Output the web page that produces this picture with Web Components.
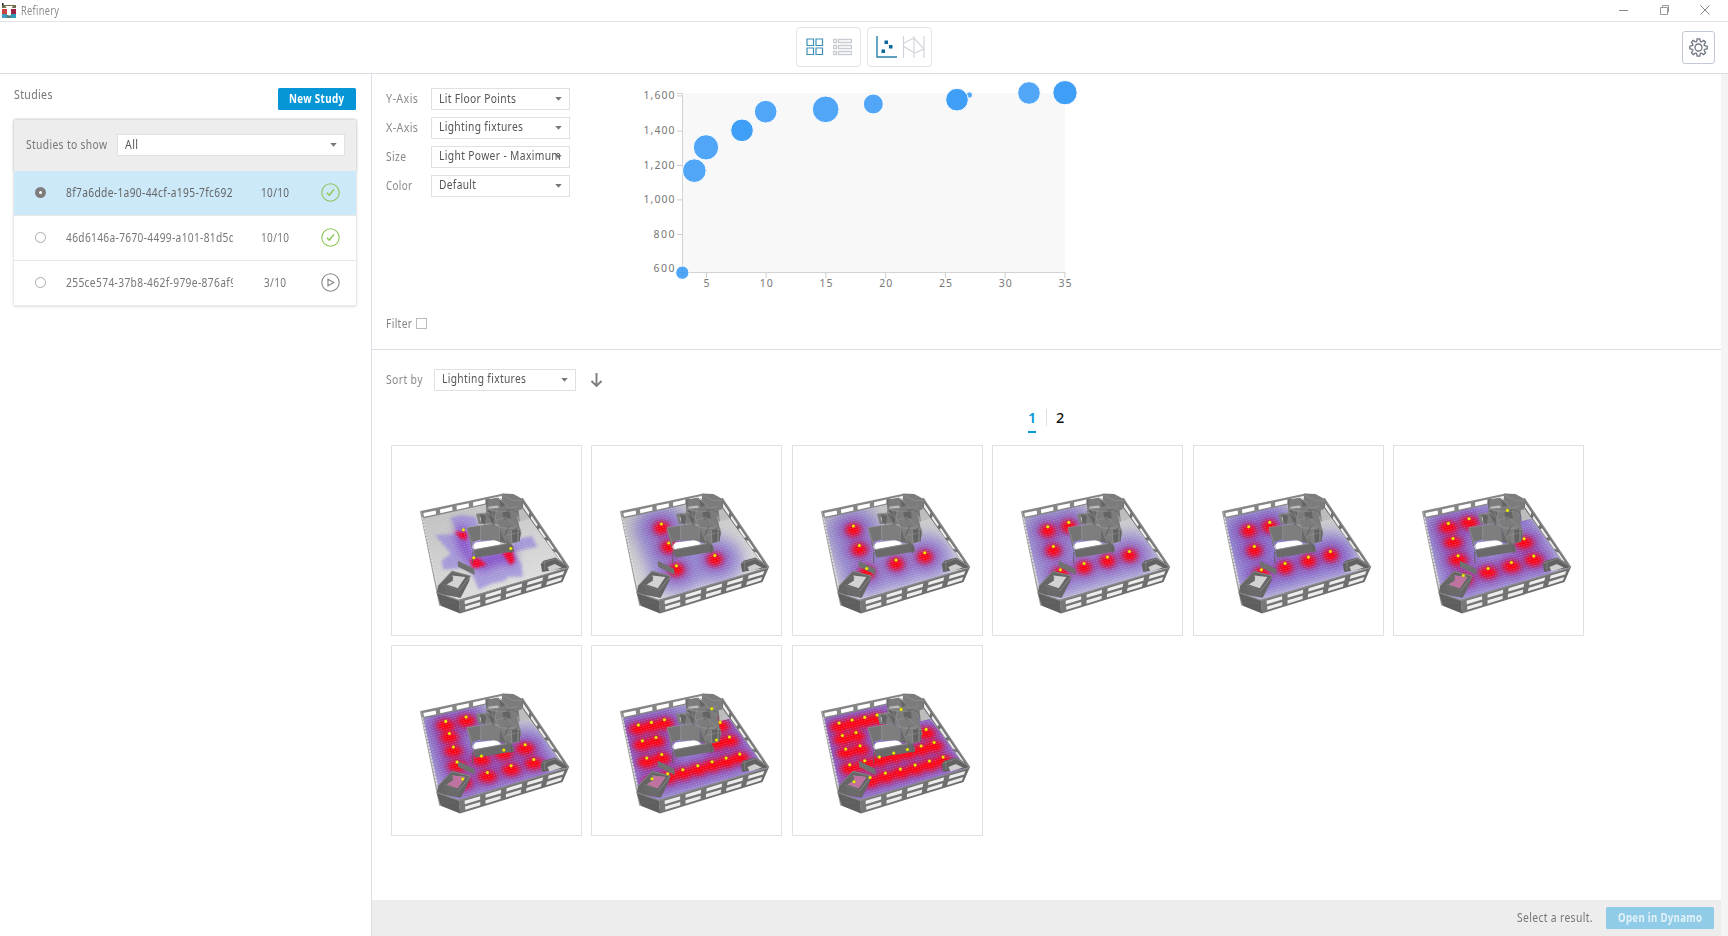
<!DOCTYPE html>
<html lang="en">
<head>
<meta charset="utf-8">
<title>Refinery</title>
<style>
html,body{margin:0;height:100%;overflow:hidden;background:#fff}
body{font:12px/16px "Noto Sans","Open Sans",sans-serif;color:#777}
</style>
</head>
<body>
<refinery-app></refinery-app>
<script>
const define = (name, css, html, setup) => customElements.define(name, class extends HTMLElement {
  connectedCallback() {
    if (this.shadowRoot) return;
    const root = this.attachShadow({mode: 'open'});
    root.innerHTML = `<style>*{box-sizing:border-box}${css}</style>${typeof html === 'function' ? html(this) : html}`;
    if (setup) setup(this, root);
  }
});

/* Single-line text condensed to a given width */
define('fit-text', `:host{display:inline-block;white-space:pre;flex:none}span{display:inline-block;letter-spacing:.4px;transform-origin:0 50%}`,
  `<span><slot></slot></span>`, (el, root) => {
    const s = root.querySelector('span'), w = +el.getAttribute('w');
    if (w) {
      const k = w / (s.getBoundingClientRect().width - .4);
      el.style.width = w + 'px';
      s.style.transform = `scaleX(${k})`;
    }
  });

define('title-bar', `:host{display:flex;height:22px;border-bottom:1px solid #e1e3e5;align-items:center;color:#8d8d8d;padding:0 0 0 2px}
  .logo{width:14px;height:16px;margin-right:5px}.win{margin-left:auto;display:flex;gap:27px;padding:0 16px 2px 0}`,
  `<svg class="logo" viewBox="0 0 14 16"><path d="M0 2h14v3H0z" fill="#6d6c4d"/><path d="M0 6h5v5H0z" fill="#c8423f"/><path d="M9 6h5v5H9z" fill="#9c2346"/><path d="M0 11h5v4H0z" fill="#4098ba"/><path d="M5 12h4v3H5z" fill="#4f7a78"/><path d="M9 11h5v4H9z" fill="#2d9bb5"/><path d="M3 3h8L8.500 7v5.500h-2V7z" fill="#fff"/><path d="M-2 -1h3.500v3.500h-3.500z" fill="#222"/></svg>
  <fit-text w="38">Refinery</fit-text>
  <div class="win"><svg width="14" height="12" viewBox="0 0 14 12"><path d="M3 6.500h9" stroke="#888"/></svg>
  <svg width="14" height="12" viewBox="0 0 14 12" fill="none" stroke="#999"><path d="M3.500 3.500h7v7h-7zM5.500 3V1.500h6v6.500H11"/></svg>
  <svg width="14" height="12" viewBox="0 0 14 12" fill="none" stroke="#888"><path d="M2.500 1.500l9 9M11.500 1.500l-9 9"/></svg></div>`);

define('tool-group', `:host{display:flex;width:65px;height:40px;border:1.500px solid #dfe3ea;border-radius:4px;align-items:center;justify-content:center;gap:9px;padding-left:1px}`, `<slot></slot>`);

define('tool-bar', `:host{display:flex;height:52px;border-bottom:1px solid #d9dce2;align-items:center;justify-content:center;gap:6px;padding-bottom:2px;position:relative}
  svg{display:block}.gear{position:absolute;right:13px;top:8.500px;width:33px;height:33px;border:1px solid #c3cad6;border-radius:3px;display:grid;place-items:center}`,
  `<tool-group><svg width="18" height="18" viewBox="0 0 18 18" fill="none" stroke="#3d8fb5" stroke-width="1.200"><path d="M1 1h6.500v6.500H1zM10 1h6.500v6.500H10zM1 10h6.500v6.500H1zM10 10h6.500v6.500H10z"/></svg>
  <svg width="19" height="18" viewBox="0 0 19 18" fill="none" stroke="#c9cdd3" stroke-width="1.300"><path d="M.5 1.500h3v3h-3zM5.500 1.500h13v3h-13zM.5 7.500h3v3h-3zM5.500 7.500h13v3h-13zM.5 13.500h3v3h-3zM5.500 13.500h13v3h-13z"/></svg></tool-group>
  <tool-group style="gap:5px"><svg width="21" height="22" viewBox="0 0 21 22"><path d="M1 0v21h20" fill="none" stroke="#2680a8" stroke-width="1.400"/><path d="M8.500 4.500h3.500V8H8.500zM13 9h3.500v3.500H13zM5.500 13.500H9V17H5.500z" fill="#0a6b9a"/></svg>
  <svg width="23" height="22" viewBox="0 0 23 22" fill="none" stroke="#d2d5dc" stroke-width="1.200"><path d="M1.500 0v22M12 0v22M22 0v22M1 7.500L12 2l10 11-9.500 4L1 10"/></svg></tool-group>
  <div class="gear"><svg width="19" height="19" viewBox="-9.500 -9.500 19 19" fill="none" stroke="#6d7280" stroke-width="1.300"><circle r="3.500"/><path id="g"/></svg></div>`,
  (el, root) => {
    let d = '';
    for (let i = 0; i < 8; i++) {
      const a = i * Math.PI / 4, p = (r, o) => (r * Math.sin(a + o)).toFixed(2) + ' ' + (-r * Math.cos(a + o)).toFixed(2);
      d += (i ? 'L' : 'M') + p(6.6, -.27) + 'L' + p(8.8, -.15) + 'L' + p(8.8, .15) + 'L' + p(6.6, .27);
      d += 'Q' + p(5.7, .39) + ' ' + p(6.6, .51);
    }
    root.querySelector('#g').setAttribute('d', d + 'Z');
  });

define('drop-down', `:host{display:flex;height:22px;border:1px solid #dfe1e3;background:#fff;color:#555;align-items:center;padding:0 0 1px 7.500px;position:relative}
  svg{position:absolute;right:7px;top:8px}`,
  `<slot></slot><svg width="7" height="4" viewBox="0 0 7 4"><path d="M.3 0h6.400L3.500 3.800z" fill="#777"/></svg>`);

define('action-button', `:host{display:flex;align-items:center;justify-content:center;height:22px;border-radius:1.500px;background:#0696d7;color:#fff;font-weight:700}
  :host([disabled]){background:#90cbe7;color:#e3f2f9}`, `<slot></slot>`);

define('study-row', `:host{display:grid;grid-template-columns:52px 167px 56px 1fr;height:45px;align-items:center;border-bottom:1px solid #e8e8e8;background:#fff;color:#777}
  :host([selected]){background:#cce9f9;color:#666}
  .r{width:11px;height:11px;border:1px solid #aaa;border-radius:50%;margin-left:21px;background:#fff}
  :host([selected]) .r{border:4px solid #7d7d7d}
  .id{overflow:hidden}.c{text-align:center}svg{display:block;margin-left:31.500px}`,
  el => `<div class="r"></div><div class="id"><slot></slot></div><div class="c" style="padding-left:28px"><fit-text w="${el.dataset.cw}">${el.dataset.count}</fit-text></div>
  <svg width="19" height="19" viewBox="0 0 19 19" fill="none" ${el.hasAttribute('done') ? 'stroke="#8cc653"' : 'stroke="#888"'}><circle cx="9.500" cy="9.500" r="8.700" stroke-width="1.100"/>${el.hasAttribute('done') ? '<path d="M5.800 9.800l2.500 2.400L13 6.400" stroke-width="1.500"/>' : '<path d="M7 6.300v6.400l5.700-3.200z" stroke-width="1.200"/>'}</svg>`);

define('studies-panel', `:host{display:block;width:372px;border-right:1px solid #dce0e6;padding:14px 15px 0 14px}
  .head{display:flex;justify-content:space-between;height:31.500px}
  .head>fit-text{margin-top:-1px}
  action-button{width:78.500px}
  .card{box-shadow:0 0 3px rgba(0,0,0,.22)}
  .show{display:flex;background:#ededed;height:51px;align-items:center;padding:0 11px 0 11.500px;justify-content:space-between;box-shadow:0 0 3px rgba(0,0,0,.15)}
  drop-down{width:228px}`,
  `<div class="head"><fit-text w="38.500">Studies</fit-text><action-button><fit-text w="55">New Study</fit-text></action-button></div>
  <div class="card"><div class="show"><fit-text w="81">Studies to show</fit-text><drop-down style="padding-left:6.500px"><fit-text w="13">All</fit-text></drop-down></div>
  <study-row selected done data-count="10/10" data-cw="28"><fit-text w="166.500">8f7a6dde-1a90-44cf-a195-7fc692</fit-text></study-row>
  <study-row done data-count="10/10" data-cw="28"><fit-text w="169">46d6146a-7670-4499-a101-81d5d</fit-text></study-row>
  <study-row data-count="3/10" data-cw="22"><fit-text w="170">255ce574-37b8-462f-979e-876af9</fit-text></study-row></div>`);

define('scatter-plot', `:host{display:block}svg{display:block;overflow:visible}text{font:10.500px "Noto Sans",sans-serif;fill:#777}`, () => {
  const ys = [['1,600', 25.7, 31], ['1,400', 61, 31], ['1,200', 95.3, 31], ['1,000', 129.7, 31], ['800', 164.3, 21], ['600', 199, 21]];
  const xs = [5, 10, 15, 20, 25, 30, 35];
  const dots = [[187, 608, 18.5], [223, 302, 34], [258, 232, 36.5], [366, 181, 32.5, 1], [437, 125, 32.5], [617, 118, 38.5], [760, 102, 28.5], [1048, 75, 8], [1011, 89, 32.5, 1], [1227, 69, 32.5], [1335, 68, 35, 1]];
  return `<svg width="480" height="230" viewBox="0 0 480 230"><path d="M62.500 23h382.500v180H62.500z" fill="#f8f8f8"/>
  <path d="M57 23.500h5.500V203M62 202.500h383.500" fill="none" stroke="#d3d3d3"/>
  ${ys.map(([t, y, w]) => `<path d="M57 ${y + .2}h5.500" stroke="#ccc"/><text x="${54.5 - w}" y="${y + 3.4}" textLength="${w}">${t}</text>`).join('')}
  ${xs.map(v => { const x = 62.5 + (v - 3) * 11.95, w = v < 10 ? 6 : 13; return `<path d="M${x} 203v5" stroke="#ccc"/><text x="${x - w / 2}" y="217" textLength="${w}">${v}</text>`; }).join('')}
  ${dots.map(([x, y, r, s]) => `<circle cx="${x / 3}" cy="${y / 3}" r="${r / 3 + .5}" fill="${s ? '#3f9ff7' : '#51a6f8'}" stroke="#fff"/>`).join('')}
  <path d="M58 202.700h8.500M62.400 199v7" stroke="#3d93e3" opacity=".45"/></svg>`;
});

define('chart-pane', `:host{display:flex;height:276px;border-bottom:1px solid #dadde3;padding:14px 0 0 14px;position:relative}
  .form{width:234px;display:flex;flex-direction:column}
  .f{display:flex;align-items:center;height:22px;margin-bottom:6.900px;color:#8a8a8a}
  .f>fit-text{margin-right:auto}drop-down{width:139px;margin-right:50.500px}
  .filter{display:flex;align-items:center;gap:3.500px;margin-top:112px;color:#858585}.box{width:11px;height:11px;border:1px solid #bbb}
  scatter-plot{margin-top:-18px}`,
  `<div class="form">
  <div class="f"><fit-text w="32">Y-Axis</fit-text><drop-down><fit-text w="77">Lit Floor Points</fit-text></drop-down></div>
  <div class="f"><fit-text w="32">X-Axis</fit-text><drop-down><fit-text w="84">Lighting fixtures</fit-text></drop-down></div>
  <div class="f"><fit-text w="20">Size</fit-text><drop-down><fit-text w="122">Light Power - Maximum</fit-text></drop-down></div>
  <div class="f"><fit-text w="26">Color</fit-text><drop-down><fit-text w="37">Default</fit-text></drop-down></div>
  <div class="filter"><fit-text w="26">Filter</fit-text><div class="box"></div></div></div>
  <scatter-plot></scatter-plot>`);

/* Isometric office floor with light fixtures and their heat map */
const lerp = (a, b, t) => [a[0] + (b[0] - a[0]) * t, a[1] + (b[1] - a[1]) * t];
const quad = (tl, tr, bl, br, u0, u1, v0, v1) => {
  const p = (u, v) => lerp(lerp(tl, tr, u), lerp(bl, br, u), v).map(n => n.toFixed(1)).join(' ');
  return `M${p(u0, v0)}L${p(u1, v0)}L${p(u1, v1)}L${p(u0, v1)}Z`;
};
const windows = (tl, tr, bl, br, n, rows) => {
  let d = '';
  for (let i = 0; i < n; i++) for (const [a, b] of rows) d += quad(tl, tr, bl, br, (i + .14) / n, (i + .88) / n, a, b);
  return d;
};
const FLOOR = 'M126 262L340 212L425 235L540 392L558 420L242 512L178 494Z';
define('floor-plan', `:host{display:block;width:191px;height:191px;border:1px solid #dde2e7;background:#fff}svg{display:block;width:190.500px;height:190.500px;margin:-1px}`, el => {
  const pts = JSON.parse(el.dataset.lights), few = el.hasAttribute('star'), level = +el.dataset.level || .5;
  const dense = pts.length > 9;
  const spots = (rx, ry, dy) => pts.map(([x, y]) => `<ellipse cx="${x}" cy="${y + dy}" rx="${rx}" ry="${ry}"/>`).join('');
  const glow = few
    ? `<g filter="url(#s)" fill="#9583da" opacity=".72"><path d="M210 262L245 255L287 260L300 300L390 375L400 330L455 318L472 350L400 365L424 400L428 440L385 440L372 452L335 460L296 478L280 440L260 412L190 418L185 392L212 370L165 315L235 312Z"/></g>
       <g filter="url(#m)" fill="#7a35c4" opacity=".7"><path d="M225 285L262 290L278 380L385 352L410 360L402 405L360 400L310 425L265 400L230 345Z"/></g>
       <g filter="url(#s)" fill="#f4002c"><path d="M224 306h36v24l-18 -4zM270 388l24-4 26 20-30 10-14 -2zM366 368l30-8 8 36-14 8z"/></g>`
    : `<g filter="url(#l)" fill="#6a50cc" opacity="${level}">${spots(84, 70, 14)}</g>
       <g filter="url(#m)" fill="#9a128f" opacity=".62">${spots(dense ? 44 : 36, dense ? 31 : 29, 12)}</g>
       <g filter="url(#r)" fill="#ff0010">${spots(dense ? 27 : 22, dense ? 17 : 18, 12)}</g>`;
  return `<svg viewBox="33 45 571 571"><defs>
  <filter id="l" x="-50%" y="-50%" width="200%" height="200%"><feGaussianBlur stdDeviation="20"/></filter>
  <filter id="m" x="-50%" y="-50%" width="200%" height="200%"><feGaussianBlur stdDeviation="12"/></filter>
  <filter id="r" x="-50%" y="-50%" width="200%" height="200%"><feGaussianBlur stdDeviation="8.500"/></filter>
  <filter id="s" x="-50%" y="-50%" width="200%" height="200%"><feGaussianBlur stdDeviation="5.500"/></filter>
  <clipPath id="c"><path d="${FLOOR}"/></clipPath>
  <linearGradient id="f" x1="0" y1="0" x2=".5" y2="1"><stop offset="0" stop-color="#bcbcbc"/><stop offset="1" stop-color="#dedede"/></linearGradient>
  <linearGradient id="w" x1="0" y1="0" x2="1" y2=".6"><stop offset="0" stop-color="#838383"/><stop offset="1" stop-color="#666"/></linearGradient>
  <pattern id="p" width="8" height="7" patternUnits="userSpaceOnUse" patternTransform="rotate(-14)"><path d="M0 0h4v1.500H0z" fill="#fff" opacity=".32"/></pattern></defs>
  <path d="${FLOOR}" fill="url(#f)"/><g clip-path="url(#c)">${glow}<path d="${FLOOR}" fill="url(#p)"/></g>
  <!-- perimeter walls -->
  <path fill="#868686" d="M122 243L370 190L370 212L125 266Z"/>
  <path fill="#fff" d="${windows([122, 243], [372, 188], [126, 268], [370, 216], 5, [[.3, .74]])}"/>
  <path d="M122 243L180 526" stroke="#a0a0a0" stroke-width="5"/><path d="M127 262L178 496" stroke="#dcdcdc" stroke-width="5" stroke-dasharray="6 4"/>
  <path fill="#707070" d="M426 204L566 412L538 390L424 232Z"/>
  <path fill="#ededed" d="${windows([426, 204], [560, 406], [425, 236], [534, 388], 5, [[.32, .72]])}"/>
  <path d="M426 204L566 412" stroke="#878787" stroke-width="4"/>
  <!-- central core -->
  <path fill="#fff" d="M276 350L286 337L350 330L364 343L382 348L285 364Z"/>
  <path fill="#747474" d="M260 292L302 286L302 328L276 336L276 354L286 381L278 366Z"/><path fill="#7e7e7e" d="M302 286L338 280L358 290L358 335L340 330L302 332Z"/>
  <path fill="#6a6a6a" d="M358 290L400 350L402 364L286 383L280 358L378 340L358 335Z"/>
  <path fill="none" stroke="#979797" stroke-width="2" d="M260 293L300 286L338 280L358 289L380 341L283 359L261 295M302 286V330"/>
  <!-- meeting rooms -->
  <path fill="#7c7c7c" d="M366 190L400 192L430 208L424 240L412 262L418 290L424 310L416 335L390 342L368 318L356 285L338 280L296 282L288 252L318 248L320 208L355 202L362 222L366 222Z"/>
  <path fill="#bdbdbd" d="M416 240L428 238L448 266L416 274ZM324 230L352 226L358 233L326 236ZM298 262L306 259L302 276Z"/>
  <path fill="#646464" d="M356 204L376 226L362 230ZM322 238L346 246L344 284L334 272ZM366 246L388 238L392 264L372 268ZM394 300L412 296L410 334L398 338ZM300 252L318 258L314 284L304 276Z"/>
  <path fill="none" stroke="#929292" stroke-width="2" d="M364 194L402 212L426 210M360 204L386 236L412 228M316 236L360 246L406 240L412 258M288 252L326 248L350 270L378 262L410 290L364 298M350 234L342 282M330 232L358 292L424 298M372 318L420 306M394 300V338"/>
  <path fill="none" stroke="#5e5e5e" stroke-width="2.500" d="M378 240Q420 232 417 274M322 252L342 286M386 288L374 318M408 294V330M418 300V334M320 208V232M394 346V370M278 366V400"/>
  <!-- screen and lower-left room -->
  <path fill="#707070" d="M233 392L282 416L284 435L234 410Z"/>
  <path fill="#666" d="M216 422L271 437L267 454L242 503L170 490L174 466Z"/>
  <path fill="#d2d2d2" d="M216 436L256 441L233 474L200 463L218 452Z"/>
  ${el.hasAttribute('lit') ? '<path d="M216 436L256 441L233 474L200 463L218 452Z" fill="#b3307f" opacity=".6"/>' : ''}
  <path fill="none" stroke="#8c8c8c" stroke-width="2.500" d="M174 468L216 424L271 438L235 483L192 464"/>
  <path fill="#6a6a6a" d="M192 464L235 482L240 503L196 490ZM204 436L220 440L217 452L206 448Z"/>
  <!-- right room -->
  <path fill="#626262" d="M482 402L490 392L526 382L545 396L566 412L486 426Z"/><path fill="#cfcfcf" d="M502 411L524 402L545 412L508 424Z"/><path d="M486 399L526 386L550 401M494 394V420" fill="none" stroke="#8f8f8f" stroke-width="2"/>
  <!-- front facade -->
  <path fill="#5f5f5f" d="M170 487L238 510L240 550L182 527Z"/><path fill="url(#w)" d="M236 509L566 412L547 456L240 550Z"/>
  <path fill="#ededed" d="${windows([244, 509], [562, 414], [248, 547], [548, 455], 5, [[.15, .41], [.6, .86]])}"/>
  <path fill="none" stroke="#8c8c8c" stroke-width="3.500" d="M170 487L237 511L566 412"/><path d="M186 504h40M188 516h44" stroke="#808080" stroke-width="2" stroke-dasharray="3 8"/>
  ${pts.map(([x, y]) => `<circle cx="${x}" cy="${y}" r="4.600" fill="#f4f000" stroke="#a5a000" stroke-width=".8"/>`).join('')}</svg>`;
});

const four = [[200,290],[263,277],[217,349],[238,419],[309,400],[379,381],[445,364]];
const shift = (a, dx, dy) => a.map(([x, y]) => [x + dx, y + dy]);
const plans = [
  {star: 1, p: [[250,299],[281,383],[392,355]]},
  {l: .6, p: [[244,282],[266,339],[289,407],[404,376]]},
  {l: .6, p: [[217,288],[235,346],[257,415],[345,390],[431,368]]},
  {l: .6, p: four}, {l: .7, p: four},
  {l: .66, lit: 1, p: shift([[206,280],[268,266],[220,325],[235,377],[251,436],[325,415],[395,397],[462,378],[433,326],[383,241]], -7, 0)},
  {l: .66, lit: 1, p: shift([[166,125],[227,112],[177,161],[189,202],[200,247],[217,298],[273,229],[340,211],[404,195],[291,278],[362,258],[430,239]], 31, 149)},
  {l: .68, lit: 1, p: shift([[747,136],[786,128],[825,120],[759,183],[800,173],[772,235],[817,224],[788,297],[835,282],[880,270],[925,258],[968,246],[1010,235],[1051,223],[981,181],[1020,172],[992,128],[967,87]], -572, 149)},
  {l: .68, lit: 1, p: shift([[177,250],[216,241],[254,233],[291,226],[187,287],[228,278],[197,328],[240,318],[209,375],[254,363],[222,426],[298,352],[341,340],[382,329],[423,319],[462,308],[438,269],[316,400],[361,388],[405,376],[448,364],[489,352],[363,209],[270,413]], -3, 29)}
];

define('results-pane', `:host{display:block;flex:1;padding:18.500px 0 0 14px}
  .sort{display:flex;align-items:center;height:22px;color:#8a8a8a}drop-down{width:142px;margin:0 14px 0 11px}
  .pages{display:flex;width:1303px;justify-content:center;margin:16px 0 0 8.500px;font-size:14.500px;height:26.500px;line-height:20px;color:#111}
  .pages b{font-weight:500;width:8px;text-align:center}.pages .on{color:#0696d7;border-bottom:2px solid #0696d7;font-weight:600}
  .pages i{width:1px;height:17px;background:#dde0e4;margin:2px 9.500px 0}
  .grid{display:grid;grid-template-columns:repeat(6,191px);gap:9.500px;margin:11.500px 0 0 4.600px}`,
  `<div class="sort"><fit-text w="36.500">Sort by</fit-text><drop-down><fit-text w="84">Lighting fixtures</fit-text></drop-down><svg width="13" height="16" viewBox="0 0 13 16" fill="none" stroke="#7d7d7d" stroke-width="1.900"><path d="M6.500 1v13M1.500 9l5 5 5-5"/></svg></div>
  <div class="pages"><b class="on">1</b><i></i><b>2</b></div>
  <div class="grid">${plans.map(o => `<floor-plan data-level="${o.l || 0}" ${o.star ? 'star' : ''} ${o.lit ? 'lit' : ''} data-lights="${JSON.stringify(o.p)}"></floor-plan>`).join('')}</div>`);

define('result-bar', `:host{display:flex;height:36px;background:#ededed;align-items:center;justify-content:flex-end;gap:14px;padding-right:7px;color:#777}action-button{width:108px}`,
  `<fit-text w="75.500">Select a result.</fit-text><action-button disabled><fit-text w="84">Open in Dynamo</fit-text></action-button>`);

define('refinery-app', `:host{display:flex;flex-direction:column;height:936px;width:1728px;overflow:hidden}
  .body{display:flex;flex:1;min-height:0}.main{flex:1;display:flex;flex-direction:column;min-width:0}.gutter{width:7px;background:#f4f4f4}`,
  `<title-bar></title-bar><tool-bar></tool-bar><div class="body"><studies-panel></studies-panel><div class="main"><chart-pane></chart-pane><results-pane></results-pane><result-bar></result-bar></div><div class="gutter"></div></div>`);
</script>
</body>
</html>
